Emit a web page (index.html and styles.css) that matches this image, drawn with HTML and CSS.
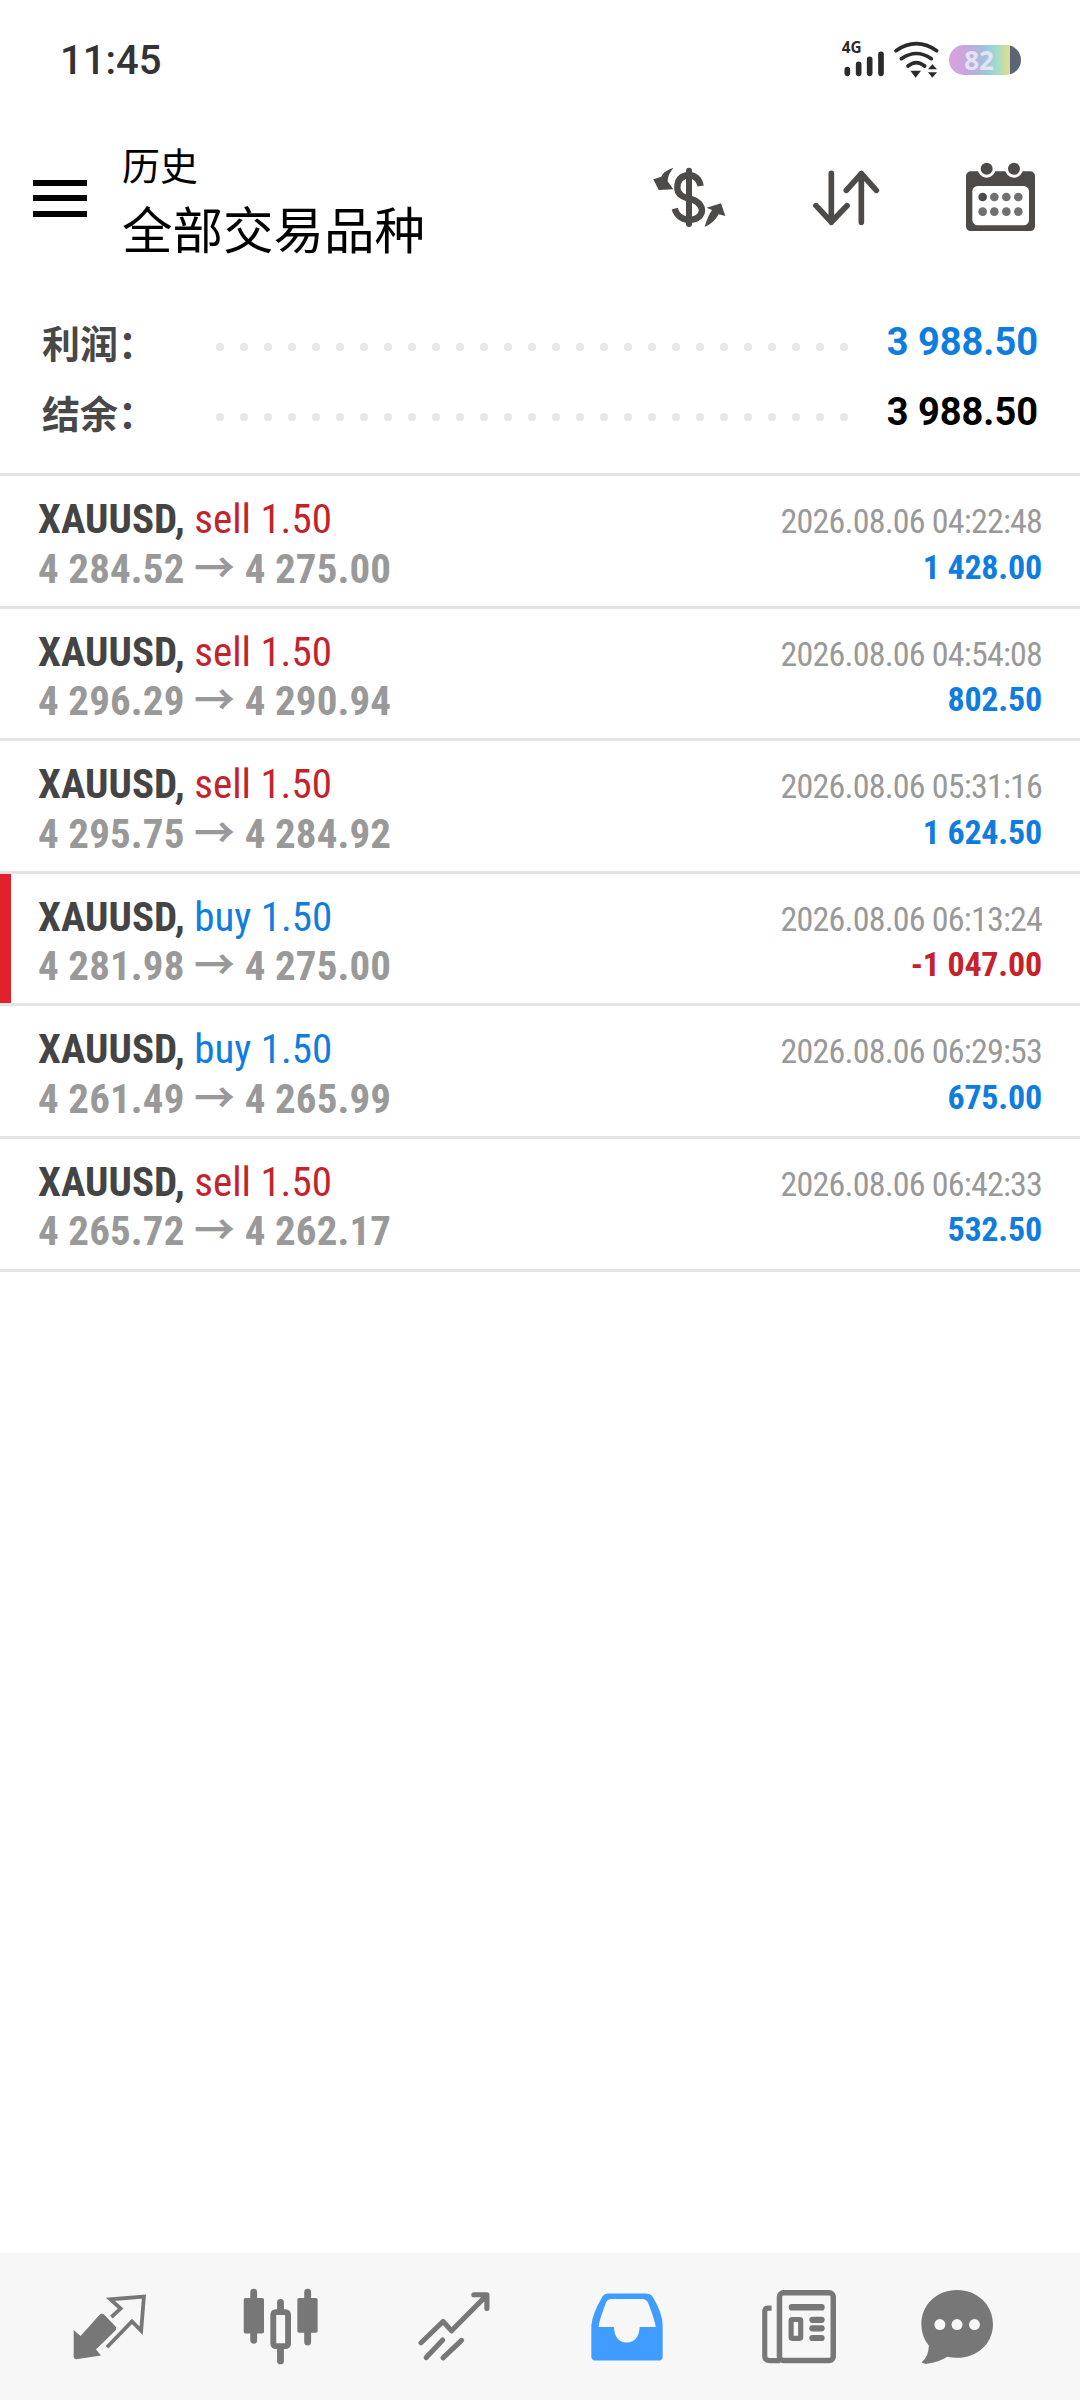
FILE: index.html
```html
<!DOCTYPE html>
<html lang="zh">
<head>
  <meta charset="UTF-8" />
  <title>历史</title>
  <link rel="stylesheet" href="styles.css">
</head>
<body>
  <div class="statusbar">
    <span class="clock">11:45</span>
    <div class="status-icons">
      <svg class="sig" width="44" height="40" viewBox="722 125 132 120">
        <text x="724" y="165" class="sig-text">4G</text>
        <g stroke="#2b2b2b" stroke-width="17" stroke-linecap="round">
          <path d="M741 214V225M775 198V225M808 183V225M842 168V225"/>
        </g>
      </svg>
      <svg class="wifi" width="48" height="40" viewBox="880 120 144 120">
        <g fill="none" stroke="#2b2b2b" stroke-width="11" stroke-linecap="round">
          <path d="M889 152Q950 110 1011 152"/>
          <path d="M905 176Q950 145 995 176"/>
          <path d="M925 198Q950 178 975 198"/>
        </g>
        <path d="M932 212H964L948 233Z" fill="#2b2b2b"/>
        <path d="M985 208H1012L998 193ZM985 217H1012L998 233Z" fill="#2b2b2b"/>
      </svg>
      <div class="battery"><span>82</span></div>
    </div>
  </div>

  <header class="topbar">
    <div class="burger"><i></i><i></i><i></i></div>
    <div class="titles">
      <div class="title-small">历史</div>
      <div class="title-big">全部交易品种</div>
    </div>
    <!-- icons drawn in coordinates of the 3x crop, so width = viewBox / 3 -->
    <svg class="ic-dollar" width="76" height="64" viewBox="155 500 228 192">
      <path d="M223 505Q192 515 186 532L162 540L178 572L222 570L205 546Q205 525 223 505Z" fill="#4d4a48"/>
      <path d="M316 683Q325 650 338 632L322 625L365 612L378 650L358 645Q345 670 316 683Z" fill="#4d4a48"/>
      <path d="M304 560Q298 530 269 527Q234 530 234 565Q234 590 269 597Q308 608 308 635Q304 660 269 662Q236 660 226 628" fill="none" stroke="#4d4a48" stroke-width="19"/>
      <path d="M269 514V674" stroke="#4d4a48" stroke-width="18" stroke-linecap="round"/>
    </svg>
    <svg class="ic-sort" width="70" height="60" viewBox="635 505 210 180">
      <g fill="none" stroke="#4d4a48" stroke-width="17" stroke-linecap="round" stroke-linejoin="round">
        <path d="M693 521V668M647 618L693 667L740 618"/>
        <path d="M783 668V522M738 572L783 522L828 572"/>
      </g>
    </svg>
    <svg class="ic-cal" width="72" height="72" viewBox="1095 482 216 216">
      <rect x="1098" y="513" width="207" height="179" rx="14" fill="#4d4a48"/>
      <circle cx="1160" cy="505" r="27" fill="#fff"/>
      <circle cx="1242" cy="505" r="27" fill="#fff"/>
      <circle cx="1160" cy="505" r="18" fill="#4d4a48"/>
      <circle cx="1242" cy="505" r="18" fill="#4d4a48"/>
      <rect x="1117" y="557" width="170" height="118" rx="16" fill="#fff"/>
      <g fill="#707070">
        <circle cx="1148" cy="590" r="13" fill="#4d4a48"/><circle cx="1183" cy="590" r="13"/><circle cx="1219" cy="590" r="13"/><circle cx="1255" cy="590" r="13"/>
        <circle cx="1148" cy="634" r="13"/><circle cx="1183" cy="634" r="13"/><circle cx="1219" cy="634" r="13"/><circle cx="1255" cy="634" r="13"/>
      </g>
    </svg>
  </header>

  <section class="summary">
    <div class="sum-row">
      <span class="sum-label">利润：</span>
      <span class="sum-dots"></span>
      <span class="sum-value blue">3 988.50</span>
    </div>
    <div class="sum-row">
      <span class="sum-label">结余：</span>
      <span class="sum-dots"></span>
      <span class="sum-value">3 988.50</span>
    </div>
  </section>

  <main class="deals">
    <div class="deal">
      <div class="deal-line">
        <span class="sym">XAUUSD, <span class="red">sell 1.50</span></span>
        <span class="time">2026.08.06 04:22:48</span>
      </div>
      <div class="deal-line">
        <span class="price">4 284.52 → 4 275.00</span>
        <span class="profit blue">1 428.00</span>
      </div>
    </div>
    <div class="deal">
      <div class="deal-line">
        <span class="sym">XAUUSD, <span class="red">sell 1.50</span></span>
        <span class="time">2026.08.06 04:54:08</span>
      </div>
      <div class="deal-line">
        <span class="price">4 296.29 → 4 290.94</span>
        <span class="profit blue">802.50</span>
      </div>
    </div>
    <div class="deal">
      <div class="deal-line">
        <span class="sym">XAUUSD, <span class="red">sell 1.50</span></span>
        <span class="time">2026.08.06 05:31:16</span>
      </div>
      <div class="deal-line">
        <span class="price">4 295.75 → 4 284.92</span>
        <span class="profit blue">1 624.50</span>
      </div>
    </div>
    <div class="deal loss">
      <div class="deal-line">
        <span class="sym">XAUUSD, <span class="blue">buy 1.50</span></span>
        <span class="time">2026.08.06 06:13:24</span>
      </div>
      <div class="deal-line">
        <span class="price">4 281.98 → 4 275.00</span>
        <span class="profit red">-1 047.00</span>
      </div>
    </div>
    <div class="deal">
      <div class="deal-line">
        <span class="sym">XAUUSD, <span class="blue">buy 1.50</span></span>
        <span class="time">2026.08.06 06:29:53</span>
      </div>
      <div class="deal-line">
        <span class="price">4 261.49 → 4 265.99</span>
        <span class="profit blue">675.00</span>
      </div>
    </div>
    <div class="deal">
      <div class="deal-line">
        <span class="sym">XAUUSD, <span class="red">sell 1.50</span></span>
        <span class="time">2026.08.06 06:42:33</span>
      </div>
      <div class="deal-line">
        <span class="price">4 265.72 → 4 262.17</span>
        <span class="profit blue">532.50</span>
      </div>
    </div>
  </main>

  <nav class="tabbar">
    <svg class="tab tab-trade" width="74" height="68" viewBox="213 160 216 198">
      <path d="M215 268L235 285L290 224Q297 216 305 224L336 256Q342 263 336 270L280 325L295 342L222 353Q215 353 215 346Z" fill="#777"/>
      <path d="M312 318L385 243L412 270L420 170L322 178L352 205L325 230" fill="none" stroke="#777" stroke-width="11"/>
    </svg>
    <svg class="tab tab-candles" width="75" height="77" viewBox="708 146 218 224">
      <g fill="#777">
        <rect x="729" y="148" width="20" height="160" rx="10"/>
        <rect x="710" y="175" width="59" height="103" rx="5"/>
        <rect x="807" y="178" width="20" height="190" rx="10"/>
        <rect x="886" y="148" width="20" height="165" rx="10"/>
        <rect x="866" y="175" width="59" height="101" rx="5"/>
      </g>
      <rect x="796" y="216" width="43" height="99" rx="7" fill="#f7f7f7" stroke="#777" stroke-width="17"/>
    </svg>
    <svg class="tab tab-chart" width="72" height="70" viewBox="1212 155 210 204">
      <g fill="none" stroke="#777" stroke-width="15" stroke-linecap="round" stroke-linejoin="round">
        <path d="M1221 303L1285 241L1310 268L1410 167M1375 163H1413V203"/>
        <path d="M1236 346L1284 295M1285 347L1339 296"/>
      </g>
    </svg>
    <svg class="tab tab-inbox" width="72" height="68" viewBox="146 156 210 198">
      <path fill-rule="evenodd" fill="#409cff" d="M147 340V250Q150 215 180 165Q185 157 195 157H305Q318 157 325 165Q355 215 355 250V340Q355 353 342 353H160Q147 353 147 340ZM168 255H213Q215 300 250 300Q285 300 288 255H335Q332 235 312 183Q305 173 295 173H205Q195 173 190 183Q170 235 168 255Z"/>
    </svg>
    <svg class="tab tab-news" width="74" height="74" viewBox="647 147 216 216">
      <rect x="698" y="155" width="157" height="198" rx="12" fill="none" stroke="#777" stroke-width="16"/>
      <path d="M675 200H665Q655 200 655 210V340Q655 353 668 353H700" fill="none" stroke="#777" stroke-width="15"/>
      <g fill="#777">
        <rect x="725" y="188" width="105" height="19" rx="9"/>
        <rect x="785" y="225" width="45" height="18" rx="9"/>
        <rect x="785" y="250" width="45" height="18" rx="9"/>
        <rect x="785" y="278" width="45" height="18" rx="9"/>
      </g>
      <rect x="732" y="233" width="28" height="55" rx="3" fill="none" stroke="#777" stroke-width="15"/>
    </svg>
    <svg class="tab tab-chat" width="72" height="74" viewBox="1108 147 210 216">
      <path fill="#777" d="M1213 147C1272 147 1318 190 1318 247C1318 304 1272 345 1213 345Q1198 345 1185 342Q1160 358 1125 362Q1112 363 1110 358Q1130 342 1131 310Q1109 283 1109 247C1109 190 1154 147 1213 147Z"/>
      <circle cx="1163" cy="248" r="16" fill="#f7f7f7"/>
      <circle cx="1213" cy="248" r="16" fill="#f7f7f7"/>
      <circle cx="1264" cy="248" r="16" fill="#f7f7f7"/>
    </svg>
  </nav>
</body>
</html>
```

FILE: styles.css
```css
* { box-sizing: border-box; }
html, body { margin: 0; padding: 0; }
body { width: 1080px; height: 2400px; background: #fff; font-family: Roboto, "Noto Sans CJK SC", sans-serif; display: flex; flex-direction: column; }

.statusbar { height: 120px; padding: 0 59px 0 60px; display: flex; align-items: center; justify-content: space-between; }
.clock { font-weight: 500; font-size: 40px; color: #333; }
.status-icons { display: flex; align-items: center; gap: 8px; }
.sig { overflow: visible; }
.sig-text { font-family: "Noto Sans", sans-serif; font-weight: 700; font-size: 46px; fill: #2b2b2b; }
.battery { width: 72px; height: 30px; border-radius: 15px; display: flex; align-items: center; justify-content: center; padding-right: 12px; background: linear-gradient(90deg, #d8a2dc 0%, #c4a8de 28%, #9fc4dc 50%, #9edccf 66%, #d6dc96 80%, #d6dc96 85%, #5a6577 85%); }
.battery span { font-family: "Noto Sans", sans-serif; font-weight: 700; font-size: 26px; color: #e4e2f4; line-height: 1; }

.topbar { height: 140px; display: flex; align-items: center; padding: 16px 0 0 33px; }
.burger { width: 54px; height: 37px; display: flex; flex-direction: column; justify-content: space-between; }
.burger i { display: block; height: 6px; background: #000; }
.titles { margin: -6px 0 0 35px; width: 529px; font-family: "Noto Sans CJK SC", sans-serif; color: #000; }
.title-small { font-size: 38px; line-height: 64px; }
.title-big { font-size: 50.5px; line-height: 62px; white-space: nowrap; }
.ic-sort { margin-left: 85px; }
.ic-cal { margin-left: 83px; margin-top: -3px; }

.summary { height: 216px; padding: 57px 42px 0 42px; display: flex; flex-direction: column; gap: 22px; border-bottom: 3px solid #e4e4e4; }
.sum-row { height: 48px; display: flex; align-items: center; }
.sum-label { width: 174px; font-family: "Noto Sans CJK SC", sans-serif; font-weight: 700; font-size: 38px; color: #484848; white-space: nowrap; }
.sum-dots { flex: 1; height: 10px; margin: 12px 36px 0 0; background: radial-gradient(circle at 4px 5px, #e8e8e8 4px, transparent 4.5px) 0 0 / 24px 10px repeat-x; }
.sum-value { font-weight: 700; font-size: 38px; color: #000; padding-top: 2px; }
.sum-value.blue { color: #0f7de0; }

.deal { position: relative; height: 132.6px; padding: 20px 38px 0 38px; border-bottom: 3px solid #e4e4e4; }
.deal-line { display: flex; justify-content: space-between; align-items: center; height: 46px; }
.deal-line + .deal-line { height: 45px; }
.sym, .price, .time, .profit { font-stretch: 75%; font-size: 41px; white-space: nowrap; }
.sym { font-weight: 700; color: #444; }
.sym span { font-weight: 400; }
.price { font-weight: 700; color: #999; letter-spacing: .1px; }
.time { font-size: 34px; color: #999; letter-spacing: -.8px; margin-top: 4px; }
.profit { font-size: 34px; font-weight: 700; letter-spacing: -.2px; margin-top: 4px; }
.blue { color: #0f7de0; }
.red { color: #c5222b; }
.deal.loss::before { content: ""; position: absolute; left: 0; top: 0; bottom: 0; width: 11px; background: #e3212c; }

.tabbar { margin-top: auto; height: 147px; background: #f7f7f7; display: flex; align-items: center; }
.tab-trade { margin-left: 73px; }
.tab-candles { margin-left: 96px; }
.tab-chart { margin-left: 100px; }
.tab-inbox { margin-left: 101px; }
.tab-news { margin-left: 99px; }
.tab-chat { margin-left: 85px; }
```
